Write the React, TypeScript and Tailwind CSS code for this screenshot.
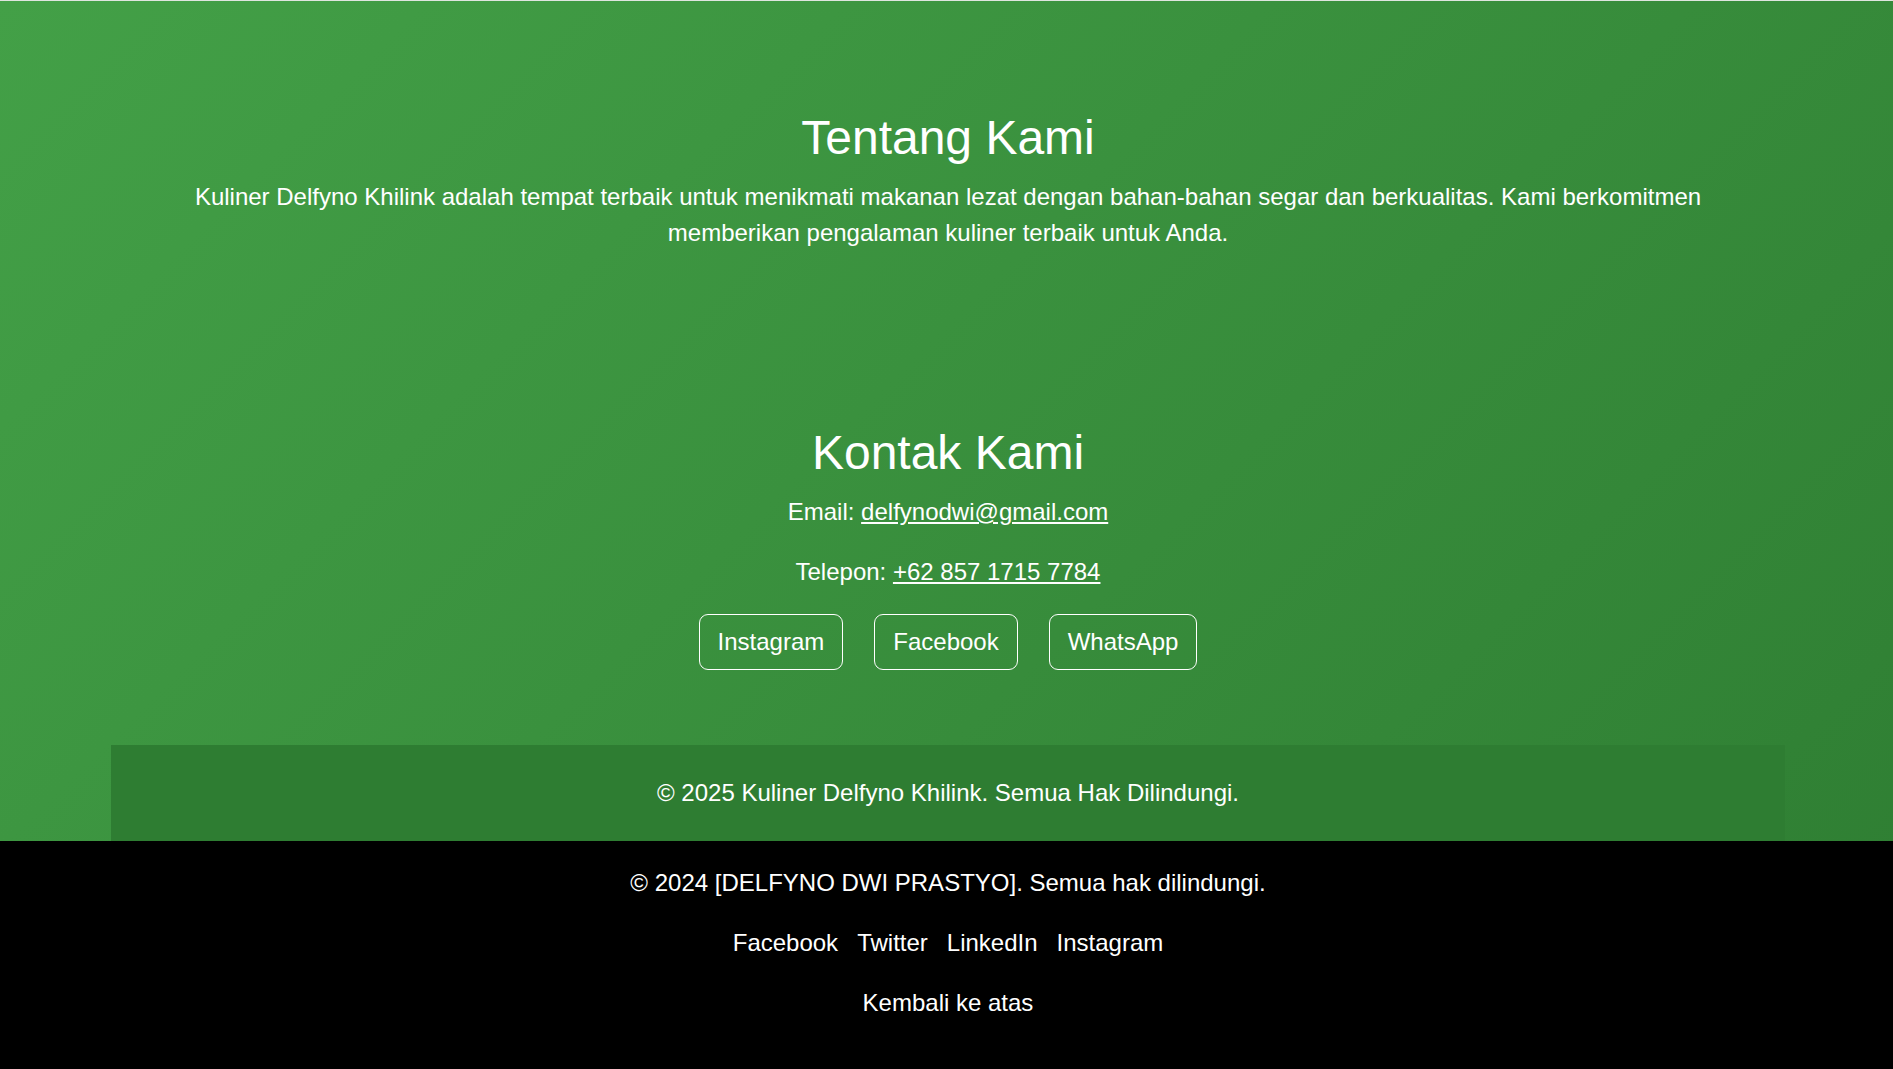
const social = ['Instagram', 'Facebook', 'WhatsApp'];
const footerLinks = ['Facebook', 'Twitter', 'LinkedIn', 'Instagram'];

export default function App() {
  return (
    <div className="flex min-h-screen flex-col border-t border-[#dfe5df] bg-linear-[135deg] from-[#43a047] to-[#2e7d32] text-center font-['Liberation_Sans',Arial,sans-serif] text-2xl leading-9 text-white">
      <div className="pl-[3px]">
        <main className="mx-auto w-full max-w-[1674px] px-[72px]">
          <section className="pt-[108px] pb-24">
            <h2 className="mb-3 text-5xl leading-[58px]">Tentang Kami</h2>
            <p>
              Kuliner Delfyno Khilink adalah tempat terbaik untuk menikmati makanan lezat dengan bahan-bahan segar dan
              berkualitas. Kami berkomitmen memberikan pengalaman kuliner terbaik untuk Anda.
            </p>
          </section>
          <section className="pt-[77px] pb-[75px]">
            <h2 className="mb-3 text-5xl leading-[58px]">Kontak Kami</h2>
            <p className="mb-6">
              Email: <a className="underline" href="mailto:delfynodwi@gmail.com">delfynodwi@gmail.com</a>
            </p>
            <p className="mb-6">
              Telepon: <a className="underline" href="tel:+6285717157784">+62 857 1715 7784</a>
            </p>
            <nav className="flex justify-center gap-[31px]">
              {social.map((name) => (
                <a key={name} href="#" className="rounded-[9px] border border-white px-[18px] py-[9px]">
                  {name}
                </a>
              ))}
            </nav>
          </section>
        </main>
        <div className="mx-auto w-full max-w-[1674px] bg-[#2e7d32] py-[30px]">
          <p>© 2025 Kuliner Delfyno Khilink. Semua Hak Dilindungi.</p>
        </div>
      </div>
      <footer className="grow bg-black py-6 pl-[3px]">
        <p className="mb-6">© 2024 [DELFYNO DWI PRASTYO]. Semua hak dilindungi.</p>
        <nav className="mb-6 flex justify-center gap-[19px]">
          {footerLinks.map((name) => (
            <a key={name} href="#">{name}</a>
          ))}
        </nav>
        <a href="#">Kembali ke atas</a>
      </footer>
    </div>
  );
}
